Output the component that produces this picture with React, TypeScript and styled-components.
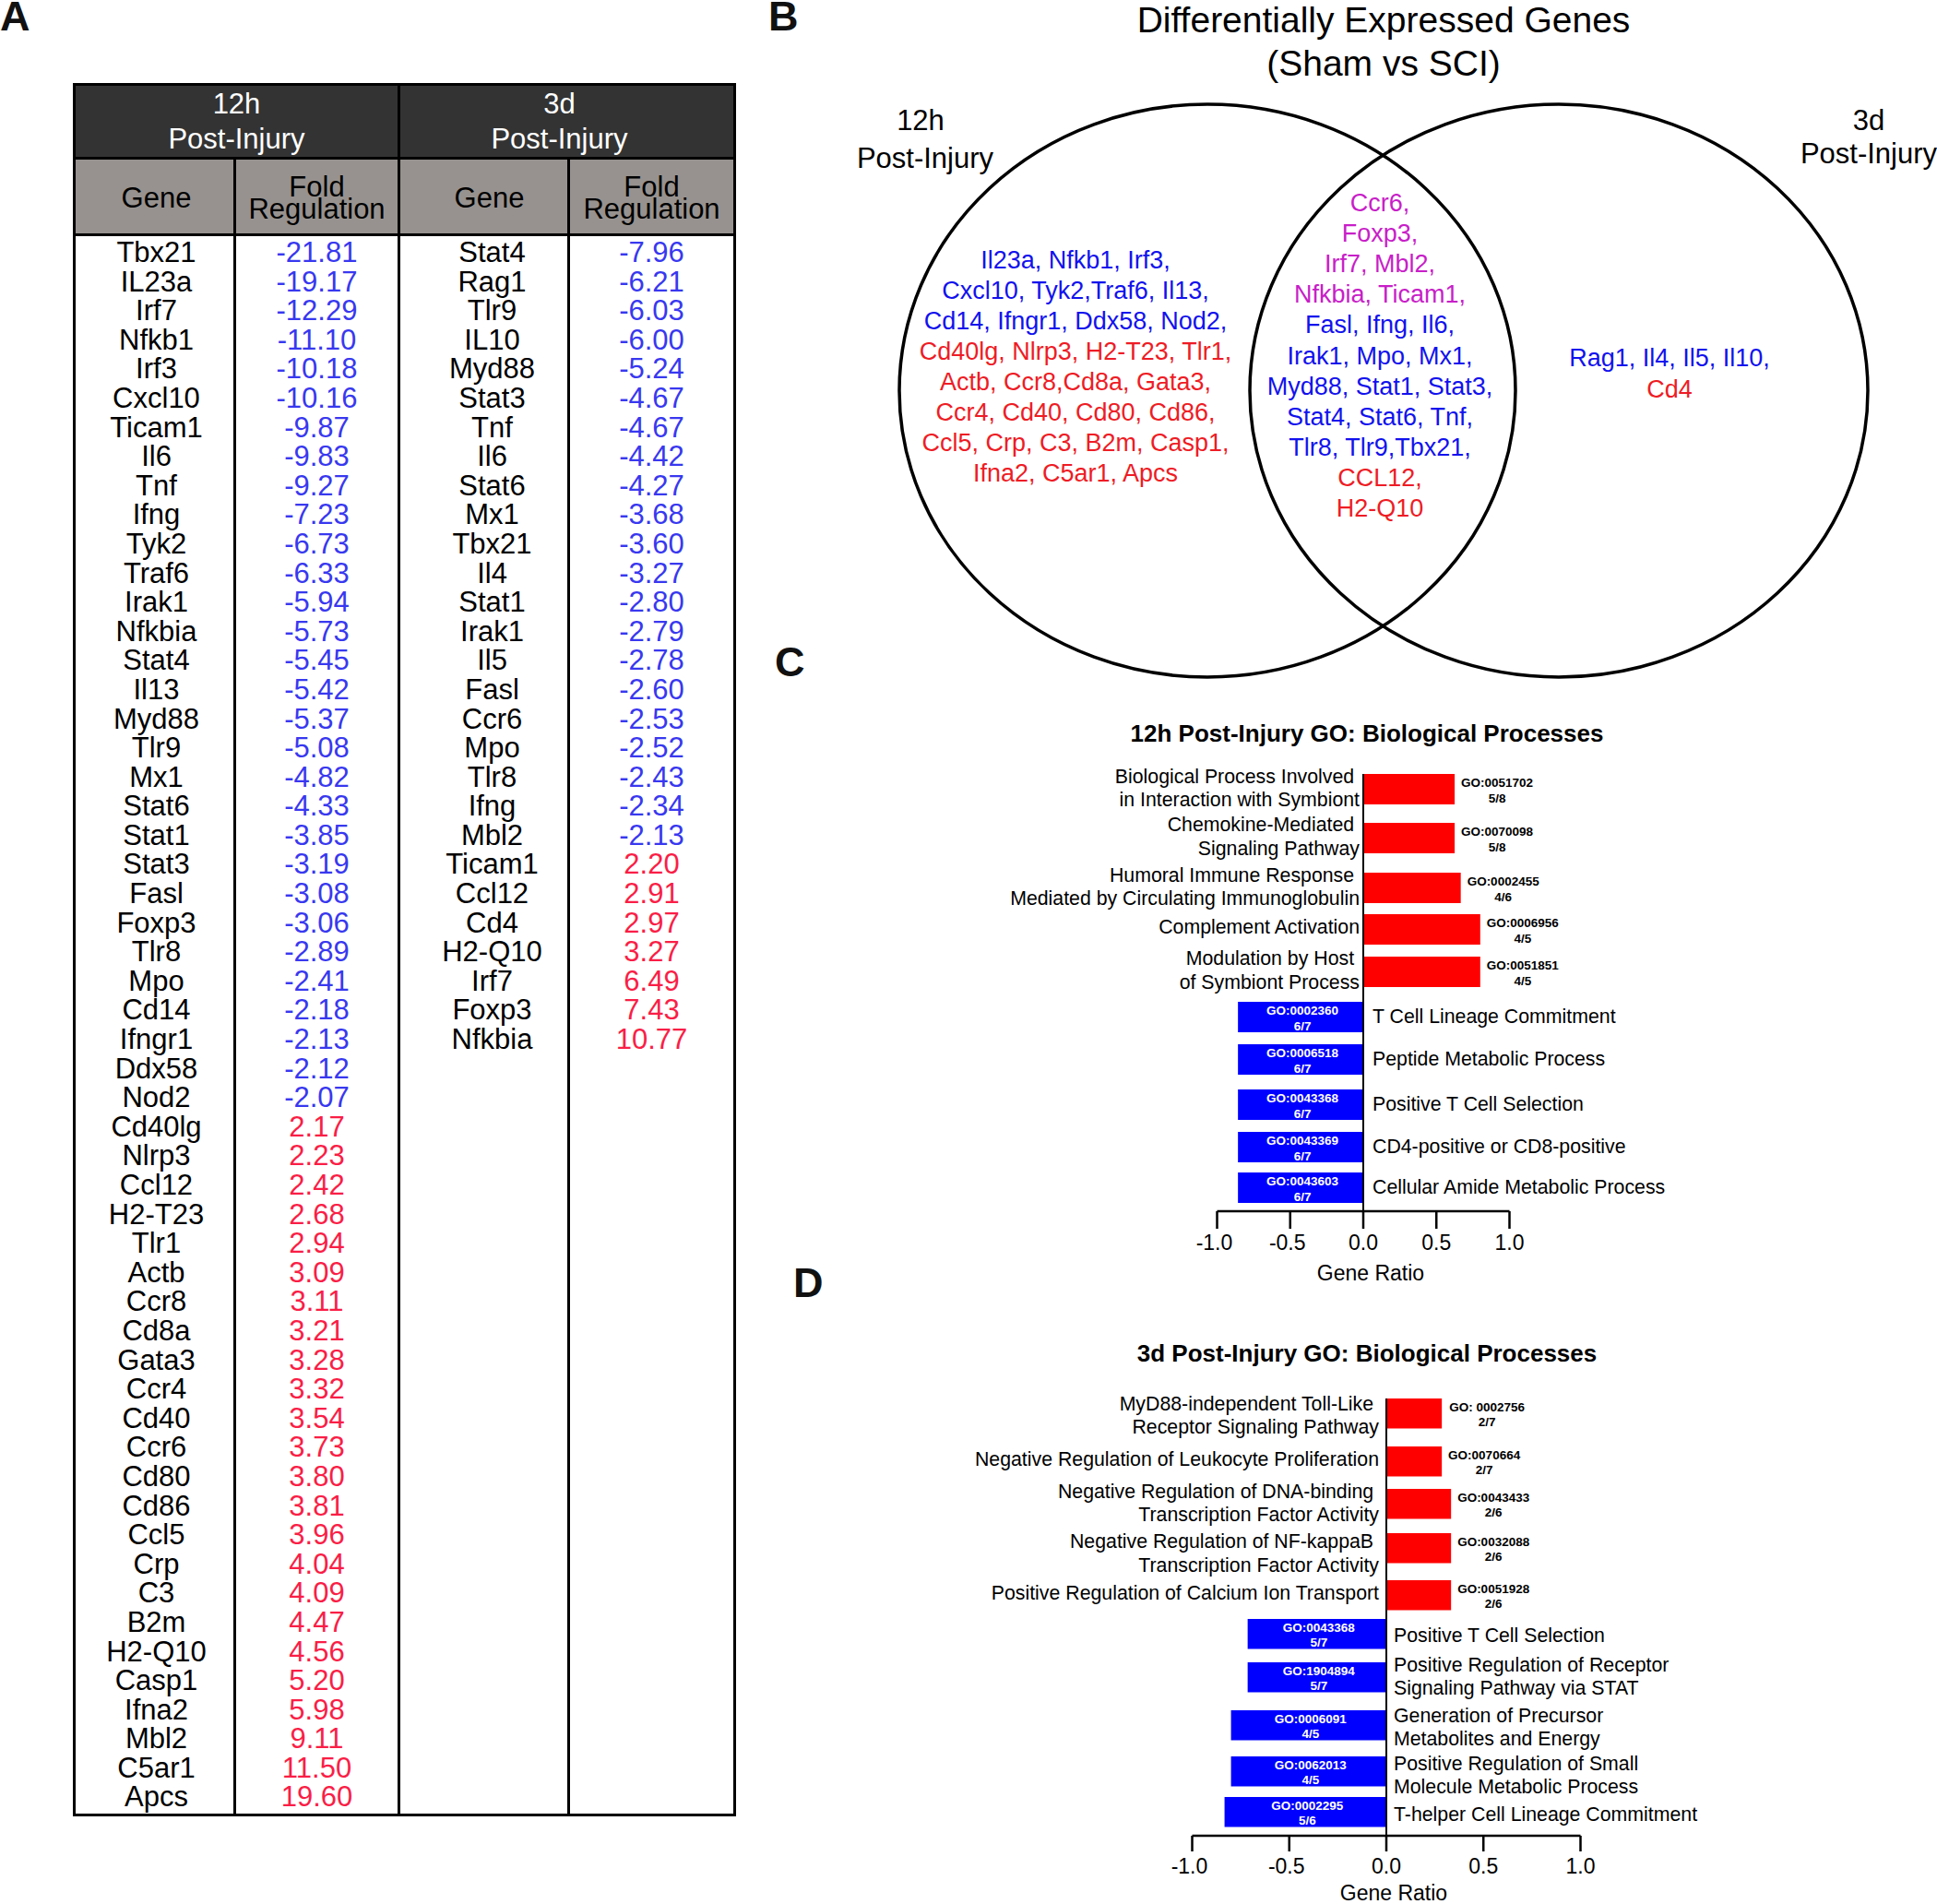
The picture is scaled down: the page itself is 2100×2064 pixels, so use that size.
import React from 'react';
import styled, { createGlobalStyle } from 'styled-components';

const FONT = `"Liberation Sans", Arial, Helvetica, sans-serif`;

const GlobalStyle = createGlobalStyle`
  html, body { margin: 0; padding: 0; background: #ffffff; }
  body { font-family: ${FONT}; color: #000000; }
`;

/* ---------- page layout ---------- */

const Figure = styled.main`
  display: grid;
  grid-template-columns: 833px 1267px;
  width: 2100px;
  height: 2064px;
  overflow: hidden;
  background: #ffffff;
  font-family: ${FONT};
`;

const LeftColumn = styled.section`
  display: flex;
  flex-direction: column;
  align-items: flex-start;
`;

const RightColumn = styled.section`
  display: grid;
  grid-template-columns: 67px 1200px;
  grid-auto-rows: auto;
  align-content: start;
`;

const PanelLetter = styled.div<{ $row?: number; $ml?: number; $mb?: number; $end?: boolean }>`
  grid-column: 1;
  grid-row: ${(p) => p.$row ?? 'auto'};
  align-self: ${(p) => (p.$end ? 'end' : 'start')};
  margin-left: ${(p) => p.$ml ?? 0}px;
  margin-bottom: ${(p) => p.$mb ?? 0}px;
  font-size: 45px;
  font-weight: 700;
  line-height: 36px;
  color: #111;
`;

/* ---------- table (panel A) ---------- */

const GeneTable = styled.div`
  margin: 54px 0 0 79px;
  display: grid;
  grid-template-columns: 171px 175px 181px 177px;
  grid-template-rows: 77px 80px 1710px;
  gap: 3px;
  border: 3px solid #000;
  background: #000;
  font-size: 31px;
`;

const GroupHeader = styled.div<{ $pr?: number }>`
  grid-column: span 2;
  background: #333333;
  color: #ffffff;
  display: flex;
  flex-direction: column;
  align-items: center;
  justify-content: center;
  padding-right: ${(p) => p.$pr ?? 0}px;
  line-height: 38px;
`;

const ColumnHeader = styled.div<{ $shift?: number }>`
  background: #97928f;
  color: #000;
  display: flex;
  flex-direction: column;
  align-items: center;
  justify-content: center;
  padding-left: ${(p) => p.$shift ?? 0}px;
  padding-top: 3px;
  line-height: 24px;
  text-align: center;
`;

const BodyCell = styled.div<{ $shift?: number }>`
  background: #ffffff;
  display: flex;
  flex-direction: column;
  align-items: center;
  padding-top: 2px;
  padding-left: ${(p) => p.$shift ?? 0}px;
  line-height: 31.6px;
`;

const GeneName = styled.span`
  color: #000;
`;

const FoldValue = styled.span<{ $up: boolean }>`
  color: ${(p) => (p.$up ? '#fa1e46' : '#3838f0')};
`;

/* ---------- venn (panel B) ---------- */

const VennTitle = styled.h1`
  grid-column: 2;
  grid-row: 1;
  margin: -2px 0 0;
  font-size: 39px;
  font-weight: 400;
  line-height: 47px;
  text-align: center;
`;

const VennSvg = styled.svg`
  grid-column: 2;
  grid-row: 2;
  display: block;
  overflow: visible;
`;

const VennOutline = styled.ellipse`
  fill: none;
  stroke: #000;
  stroke-width: 3.5;
`;

const SetLabel = styled.text`
  font-family: ${FONT};
  font-size: 31px;
  fill: #000;
  text-anchor: middle;
  dominant-baseline: central;
`;

const toneColor: Record<string, string> = {
  blue: '#1212ee',
  red: '#ee1c25',
  magenta: '#c81ec8',
};

const GeneLine = styled.text<{ $tone: string }>`
  font-family: ${FONT};
  font-size: 27px;
  fill: ${(p) => toneColor[p.$tone]};
  text-anchor: middle;
  dominant-baseline: central;
`;

/* ---------- bar charts (panels C, D) ---------- */

const ChartTitle = styled.h2<{ $row: number; $mt: number }>`
  grid-column: 2;
  grid-row: ${(p) => p.$row};
  margin: ${(p) => p.$mt}px 0 0;
  padding-right: 36px;
  font-size: 26px;
  font-weight: 700;
  line-height: 30px;
  text-align: center;
`;

const ChartSvg = styled.svg<{ $row: number }>`
  grid-column: 2;
  grid-row: ${(p) => p.$row};
  display: block;
  overflow: visible;
`;

const Bar = styled.rect<{ $up: boolean }>`
  fill: ${(p) => (p.$up ? '#ff0000' : '#0000ff')};
`;

const TermLabel = styled.text<{ $end?: boolean }>`
  font-family: ${FONT};
  font-size: 21.3px;
  fill: #000;
  text-anchor: ${(p) => (p.$end ? 'end' : 'start')};
  dominant-baseline: central;
  white-space: pre;
`;

const GoNote = styled.text<{ $light?: boolean }>`
  font-family: ${FONT};
  font-size: 13.5px;
  font-weight: 700;
  fill: ${(p) => (p.$light ? '#ffffff' : '#000000')};
  text-anchor: middle;
  dominant-baseline: central;
`;

const AxisLine = styled.line<{ $w?: number }>`
  stroke: #000;
  stroke-width: ${(p) => p.$w ?? 2.5};
`;

const TickText = styled.text`
  font-family: ${FONT};
  font-size: 23px;
  fill: #000;
  text-anchor: middle;
  dominant-baseline: central;
`;

/* ---------- data ---------- */

const h12: [string, number][] = [
  ['Tbx21', -21.81], ['IL23a', -19.17], ['Irf7', -12.29], ['Nfkb1', -11.1], ['Irf3', -10.18],
  ['Cxcl10', -10.16], ['Ticam1', -9.87], ['Il6', -9.83], ['Tnf', -9.27], ['Ifng', -7.23],
  ['Tyk2', -6.73], ['Traf6', -6.33], ['Irak1', -5.94], ['Nfkbia', -5.73], ['Stat4', -5.45],
  ['Il13', -5.42], ['Myd88', -5.37], ['Tlr9', -5.08], ['Mx1', -4.82], ['Stat6', -4.33],
  ['Stat1', -3.85], ['Stat3', -3.19], ['Fasl', -3.08], ['Foxp3', -3.06], ['Tlr8', -2.89],
  ['Mpo', -2.41], ['Cd14', -2.18], ['Ifngr1', -2.13], ['Ddx58', -2.12], ['Nod2', -2.07],
  ['Cd40lg', 2.17], ['Nlrp3', 2.23], ['Ccl12', 2.42], ['H2-T23', 2.68], ['Tlr1', 2.94],
  ['Actb', 3.09], ['Ccr8', 3.11], ['Cd8a', 3.21], ['Gata3', 3.28], ['Ccr4', 3.32],
  ['Cd40', 3.54], ['Ccr6', 3.73], ['Cd80', 3.8], ['Cd86', 3.81], ['Ccl5', 3.96],
  ['Crp', 4.04], ['C3', 4.09], ['B2m', 4.47], ['H2-Q10', 4.56], ['Casp1', 5.2],
  ['Ifna2', 5.98], ['Mbl2', 9.11], ['C5ar1', 11.5], ['Apcs', 19.6],
];

const d3: [string, number][] = [
  ['Stat4', -7.96], ['Rag1', -6.21], ['Tlr9', -6.03], ['IL10', -6.0], ['Myd88', -5.24],
  ['Stat3', -4.67], ['Tnf', -4.67], ['Il6', -4.42], ['Stat6', -4.27], ['Mx1', -3.68],
  ['Tbx21', -3.6], ['Il4', -3.27], ['Stat1', -2.8], ['Irak1', -2.79], ['Il5', -2.78],
  ['Fasl', -2.6], ['Ccr6', -2.53], ['Mpo', -2.52], ['Tlr8', -2.43], ['Ifng', -2.34],
  ['Mbl2', -2.13], ['Ticam1', 2.2], ['Ccl12', 2.91], ['Cd4', 2.97], ['H2-Q10', 3.27],
  ['Irf7', 6.49], ['Foxp3', 7.43], ['Nfkbia', 10.77],
];

const vennLeft: [string, string][] = [
  ['Il23a, Nfkb1, Irf3,', 'blue'],
  ['Cxcl10, Tyk2,Traf6, Il13,', 'blue'],
  ['Cd14, Ifngr1, Ddx58, Nod2,', 'blue'],
  ['Cd40lg, Nlrp3, H2-T23, Tlr1,', 'red'],
  ['Actb, Ccr8,Cd8a, Gata3,', 'red'],
  ['Ccr4, Cd40, Cd80, Cd86,', 'red'],
  ['Ccl5, Crp, C3, B2m, Casp1,', 'red'],
  ['Ifna2, C5ar1, Apcs', 'red'],
];

const vennMiddle: [string, string][] = [
  ['Ccr6,', 'magenta'],
  ['Foxp3,', 'magenta'],
  ['Irf7, Mbl2,', 'magenta'],
  ['Nfkbia, Ticam1,', 'magenta'],
  ['Fasl, Ifng, Il6,', 'blue'],
  ['Irak1, Mpo, Mx1,', 'blue'],
  ['Myd88, Stat1, Stat3,', 'blue'],
  ['Stat4, Stat6, Tnf,', 'blue'],
  ['Tlr8, Tlr9,Tbx21,', 'blue'],
  ['CCL12,', 'red'],
  ['H2-Q10', 'red'],
];

const vennRight: [string, string][] = [
  ['Rag1, Il4, Il5, Il10,', 'blue'],
  ['Cd4', 'red'],
];

type Term = {
  top: number;
  ratio: number;
  go: string;
  frac: string;
  lines: [string, number][];
  goShift?: number;
};

type ChartSpec = {
  height: number;
  zeroX: number;
  unit: number;
  barH: number;
  axisY: number;
  tickEnd: number;
  tickLabelY: number;
  ratioY: number;
  leftLabelX: number;
  rightLabelX: number;
  goTop: number;
  fracTop: number;
  up: Term[];
  down: Term[];
};

const NB = '\u00a0';

const chartC: ChartSpec = {
  height: 600,
  zeroX: 578,
  unit: 158.5,
  barH: 33,
  axisY: 503,
  tickEnd: 522,
  tickLabelY: 537,
  ratioY: 570,
  leftLabelX: 574,
  rightLabelX: 588,
  goTop: 9.5,
  fracTop: 26,
  up: [
    { top: 29, ratio: 5 / 8, go: 'GO:0051702', frac: '5/8', lines: [['Biological Process Involved' + NB, 32], ['in Interaction with Symbiont', 57]] },
    { top: 82, ratio: 5 / 8, go: 'GO:0070098', frac: '5/8', lines: [['Chemokine-Mediated' + NB, 84], ['Signaling Pathway', 110]] },
    { top: 136, ratio: 4 / 6, go: 'GO:0002455', frac: '4/6', lines: [['Humoral Immune Response' + NB, 139], ['Mediated by Circulating Immunoglobulin', 164]] },
    { top: 181, ratio: 4 / 5, go: 'GO:0006956', frac: '4/5', lines: [['Complement Activation', 195]] },
    { top: 227, ratio: 4 / 5, go: 'GO:0051851', frac: '4/5', lines: [['Modulation by Host' + NB, 229], ['of Symbiont Process', 255]] },
  ],
  down: [
    { top: 276, ratio: 6 / 7, go: 'GO:0002360', frac: '6/7', lines: [['T Cell Lineage Commitment', 292]] },
    { top: 322, ratio: 6 / 7, go: 'GO:0006518', frac: '6/7', lines: [['Peptide Metabolic Process', 338]] },
    { top: 371, ratio: 6 / 7, go: 'GO:0043368', frac: '6/7', lines: [['Positive T Cell Selection', 387]] },
    { top: 417, ratio: 6 / 7, go: 'GO:0043369', frac: '6/7', lines: [['CD4-positive or CD8-positive', 433]] },
    { top: 461, ratio: 6 / 7, go: 'GO:0043603', frac: '6/7', lines: [['Cellular Amide Metabolic Process', 477]] },
  ],
};

const chartD: ChartSpec = {
  height: 582,
  zeroX: 603,
  unit: 210.5,
  barH: 32.5,
  axisY: 508,
  tickEnd: 525,
  tickLabelY: 541,
  ratioY: 570,
  leftLabelX: 595,
  rightLabelX: 611,
  goTop: 9,
  fracTop: 25.5,
  up: [
    { top: 34, ratio: 2 / 7, go: 'GO: 0002756', frac: '2/7', goShift: 49, lines: [['MyD88-independent Toll-Like' + NB, 40], ['Receptor Signaling Pathway', 65]] },
    { top: 86, ratio: 2 / 7, go: 'GO:0070664', frac: '2/7', lines: [['Negative Regulation of Leukocyte Proliferation', 100]] },
    { top: 132, ratio: 2 / 6, go: 'GO:0043433', frac: '2/6', lines: [['Negative Regulation of DNA-binding' + NB, 135], ['Transcription Factor Activity', 160]] },
    { top: 180, ratio: 2 / 6, go: 'GO:0032088', frac: '2/6', lines: [['Negative Regulation of NF-kappaB' + NB, 189], ['Transcription Factor Activity', 215]] },
    { top: 231, ratio: 2 / 6, go: 'GO:0051928', frac: '2/6', lines: [['Positive Regulation of Calcium Ion Transport', 245]] },
  ],
  down: [
    { top: 273, ratio: 5 / 7, go: 'GO:0043368', frac: '5/7', lines: [['Positive T Cell Selection', 291]] },
    { top: 320, ratio: 5 / 7, go: 'GO:1904894', frac: '5/7', lines: [['Positive Regulation of Receptor', 323], ['Signaling Pathway via STAT', 348]] },
    { top: 372, ratio: 4 / 5, go: 'GO:0006091', frac: '4/5', lines: [['Generation of Precursor', 378], ['Metabolites and Energy', 403]] },
    { top: 422, ratio: 4 / 5, go: 'GO:0062013', frac: '4/5', lines: [['Positive Regulation of Small', 430], ['Molecule Metabolic Process', 455]] },
    { top: 466, ratio: 5 / 6, go: 'GO:0002295', frac: '5/6', lines: [['T-helper Cell Lineage Commitment', 485]] },
  ],
};

/* ---------- components ---------- */

function Table() {
  return (
    <GeneTable>
      <GroupHeader>
        <span>12h</span>
        <span>Post-Injury</span>
      </GroupHeader>
      <GroupHeader $pr={16}>
        <span>3d</span>
        <span>Post-Injury</span>
      </GroupHeader>
      <ColumnHeader $shift={4}>Gene</ColumnHeader>
      <ColumnHeader>
        <span>Fold</span>
        <span>Regulation</span>
      </ColumnHeader>
      <ColumnHeader $shift={12}>Gene</ColumnHeader>
      <ColumnHeader>
        <span>Fold</span>
        <span>Regulation</span>
      </ColumnHeader>
      <BodyCell $shift={4}>
        {h12.map(([g], i) => (
          <GeneName key={i}>{g}</GeneName>
        ))}
      </BodyCell>
      <BodyCell>
        {h12.map(([, v], i) => (
          <FoldValue key={i} $up={v > 0}>{v.toFixed(2)}</FoldValue>
        ))}
      </BodyCell>
      <BodyCell $shift={18}>
        {d3.map(([g], i) => (
          <GeneName key={i}>{g}</GeneName>
        ))}
      </BodyCell>
      <BodyCell>
        {d3.map(([, v], i) => (
          <FoldValue key={i} $up={v > 0}>{v.toFixed(2)}</FoldValue>
        ))}
      </BodyCell>
    </GeneTable>
  );
}

function GeneGroup({ x, y, pitch, lines }: { x: number; y: number; pitch: number; lines: [string, string][] }) {
  return (
    <g>
      {lines.map(([t, tone], i) => (
        <GeneLine key={i} x={x} y={y + i * pitch} $tone={tone}>
          {t}
        </GeneLine>
      ))}
    </g>
  );
}

function Venn() {
  return (
    <VennSvg width={1200} height={650} viewBox="0 0 1200 650">
      <VennOutline cx={409} cy={331.5} rx={334} ry={310.5} />
      <VennOutline cx={790} cy={331.5} rx={335} ry={310.5} />
      <SetLabel x={98} y={38}>12h</SetLabel>
      <SetLabel x={103} y={79}>Post-Injury</SetLabel>
      <SetLabel x={1126} y={38}>3d</SetLabel>
      <SetLabel x={1126} y={74}>Post-Injury</SetLabel>
      <GeneGroup x={266} y={190} pitch={33} lines={vennLeft} />
      <GeneGroup x={596} y={128} pitch={33.1} lines={vennMiddle} />
      <GeneGroup x={910} y={296} pitch={34} lines={vennRight} />
    </VennSvg>
  );
}

function GoChart({ spec, row }: { spec: ChartSpec; row: number }) {
  const { zeroX, unit, barH } = spec;
  const firstTop = spec.up[0].top;
  const ticks = [-1, -0.5, 0, 0.5, 1];
  return (
    <ChartSvg $row={row} width={1200} height={spec.height} viewBox={`0 0 1200 ${spec.height}`}>
      {spec.up.map((t, i) => {
        const w = t.ratio * unit;
        const cx = zeroX + w + (t.goShift ?? 46);
        return (
          <g key={`u${i}`}>
            <Bar $up x={zeroX} y={t.top} width={w} height={barH} />
            <GoNote x={cx} y={t.top + spec.goTop}>{t.go}</GoNote>
            <GoNote x={cx} y={t.top + spec.fracTop}>{t.frac}</GoNote>
            {t.lines.map(([s, y], j) => (
              <TermLabel key={j} $end x={spec.leftLabelX} y={y}>
                {s}
              </TermLabel>
            ))}
          </g>
        );
      })}
      {spec.down.map((t, i) => {
        const w = t.ratio * unit;
        const cx = zeroX - w / 2 + 2;
        return (
          <g key={`d${i}`}>
            <Bar $up={false} x={zeroX - w} y={t.top} width={w} height={barH} />
            <GoNote $light x={cx} y={t.top + spec.goTop}>{t.go}</GoNote>
            <GoNote $light x={cx} y={t.top + spec.fracTop}>{t.frac}</GoNote>
            {t.lines.map(([s, y], j) => (
              <TermLabel key={j} x={spec.rightLabelX} y={y}>
                {s}
              </TermLabel>
            ))}
          </g>
        );
      })}
      <AxisLine $w={2} x1={zeroX} y1={firstTop} x2={zeroX} y2={spec.axisY} />
      <AxisLine x1={zeroX - unit} y1={spec.axisY} x2={zeroX + unit} y2={spec.axisY} />
      {ticks.map((v) => {
        const x = zeroX + v * unit;
        return (
          <g key={v}>
            <AxisLine x1={x} y1={spec.axisY} x2={x} y2={spec.tickEnd} />
            <TickText x={v < 0 ? x - 3 : x} y={spec.tickLabelY}>
              {v.toFixed(1)}
            </TickText>
          </g>
        );
      })}
      <TickText x={zeroX + 8} y={spec.ratioY}>Gene Ratio</TickText>
    </ChartSvg>
  );
}

export default function App() {
  return (
    <>
      <GlobalStyle />
      <Figure>
        <LeftColumn>
          <PanelLetter>A</PanelLetter>
          <Table />
        </LeftColumn>
        <RightColumn>
          <PanelLetter $row={1}>B</PanelLetter>
          <VennTitle>
            Differentially Expressed Genes
            <br />
            (Sham vs SCI)
          </VennTitle>
          <PanelLetter $row={2} $end $ml={7} $mb={6}>C</PanelLetter>
          <Venn />
          <ChartTitle $row={3} $mt={38}>12h Post-Injury GO: Biological Processes</ChartTitle>
          <PanelLetter $row={4} $end $ml={27} $mb={1}>D</PanelLetter>
          <GoChart spec={chartC} row={4} />
          <ChartTitle $row={5} $mt={42}>3d Post-Injury GO: Biological Processes</ChartTitle>
          <GoChart spec={chartD} row={6} />
        </RightColumn>
      </Figure>
    </>
  );
}
